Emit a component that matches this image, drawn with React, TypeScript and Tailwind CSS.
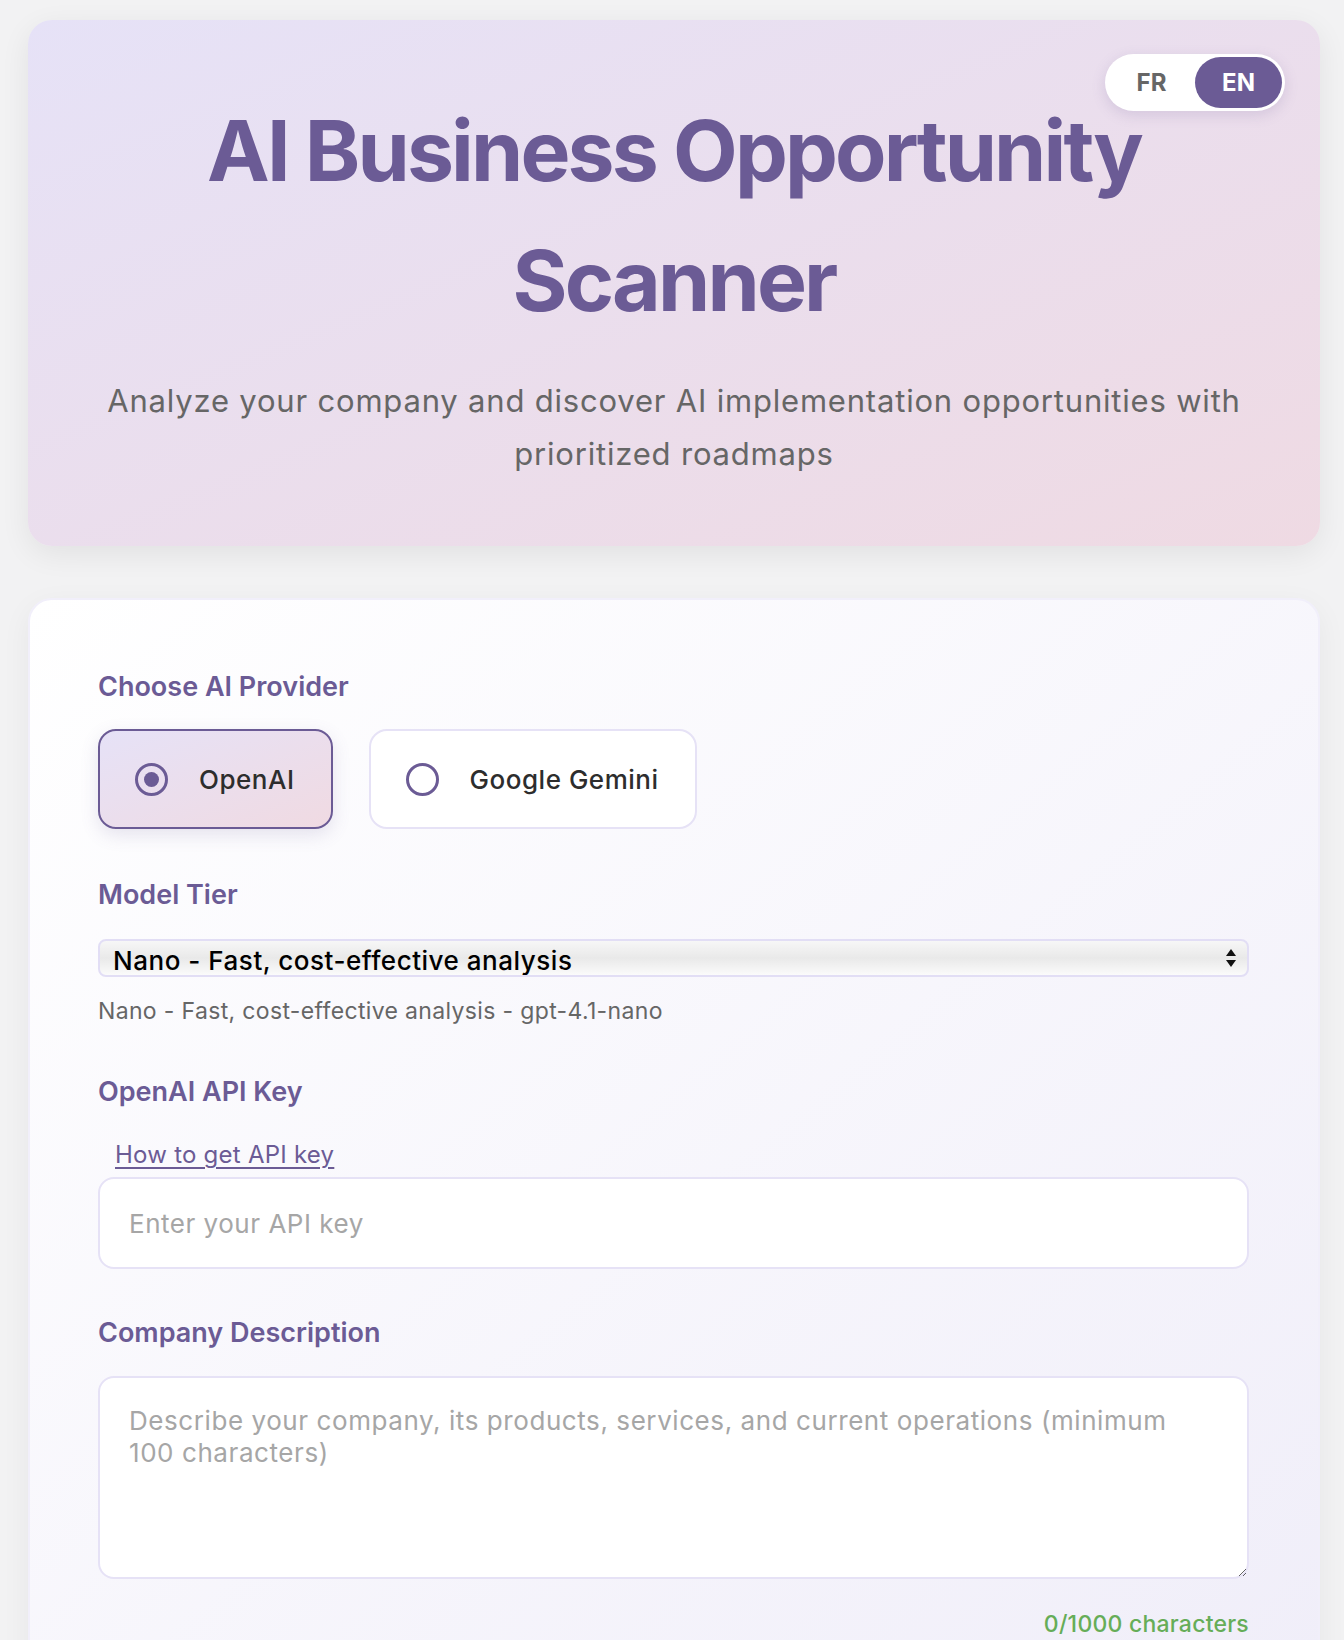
import { useState } from "react";

const font = { fontFamily: "Inter, 'Noto Sans', sans-serif" };

// Provider list
const providers = [
  { id: "openai", label: "OpenAI" },
  { id: "gemini", label: "Google Gemini" },
];

function Radio({ checked }: { checked: boolean }) {
  return (
    <span className="w-[33px] h-[33px] rounded-full border-[3px] border-[#6b5b95] flex items-center justify-center shrink-0">
      {checked && <span className="w-[15px] h-[15px] rounded-full bg-[#6b5b95]" />}
    </span>
  );
}

export default function App() {
  const [lang, setLang] = useState("en");
  const [provider, setProvider] = useState("openai");
  const [description, setDescription] = useState("");

  return (
    <div className="min-h-[1640px] bg-[#f2f2f3] pl-[28px] pr-[24px] pt-[20px] pb-10" style={font}>
      {/* Header */}
      <header className="relative rounded-3xl bg-gradient-to-br from-[#e6e2f7] to-[#efdae3] px-16 pt-[66px] pb-[66px] text-center shadow-[0_8px_30px_rgba(0,0,0,0.07)]">
        <div className="absolute top-[34px] right-[35px] flex items-center h-[57px] w-[180px] p-[3px] bg-white rounded-full shadow-[0_4px_14px_rgba(107,91,149,0.18)]">
          <button
            onClick={() => setLang("fr")}
            className={`flex-1 h-full rounded-full text-[24px] font-bold ${
              lang === "fr" ? "bg-[#6b5b95] text-white" : "text-[#666666]"
            }`}
          >
            FR
          </button>
          <button
            onClick={() => setLang("en")}
            className={`flex-1 h-full rounded-full text-[24px] font-bold ${
              lang === "en" ? "bg-[#6b5b95] text-white" : "text-[#666666]"
            }`}
          >
            EN
          </button>
        </div>

        <h1 className="text-[84px] leading-[130px] font-bold tracking-[-0.034em] text-[#6b5b95]">
          AI Business Opportunity
          <br />
          Scanner
        </h1>
        <p className="mt-[28px] text-[31px] leading-[53px] tracking-[0.026em] text-[#666666]">
          Analyze your company and discover AI implementation opportunities with prioritized roadmaps
        </p>
      </header>

      {/* Form card */}
      <main className="mt-[52px] rounded-3xl border-2 border-[#f1effa] bg-gradient-to-br from-white to-[#f0eef9] pl-[68px] pr-[69px] pt-[71px] pb-10 shadow-[0_8px_30px_rgba(0,0,0,0.05)]">
        {/* Provider */}
        <h2 className="text-[27px] leading-[32px] font-semibold text-[#6b5b95]">Choose AI Provider</h2>
        <div className="mt-[26px] flex gap-[36px]">
          {providers.map((p) => {
            const active = provider === p.id;
            return (
              <button
                key={p.id}
                onClick={() => setProvider(p.id)}
                className={`h-[100px] flex items-center gap-[31px] pl-[35px] pr-[36px] rounded-[18px] border-2 text-[26px] font-medium tracking-[0.02em] text-[#2d2d2d] ${
                  active
                    ? "border-[#6b5b95] bg-gradient-to-br from-[#e6e2f7] to-[#f0dae2] shadow-[0_6px_18px_rgba(107,91,149,0.16)]"
                    : "border-[#e6e2f6] bg-white"
                }`}
              >
                <Radio checked={active} />
                {p.label}
              </button>
            );
          })}
        </div>

        {/* Model tier */}
        <h2 className="mt-[50px] text-[27px] leading-[32px] font-semibold text-[#6b5b95]">Model Tier</h2>
        <div className="relative mt-[28px]">
          <select className="w-full h-[38px] appearance-none rounded-lg border-2 border-[#e2def5] bg-gradient-to-b from-[#f7f7f7] via-[#e9e9e9] to-[#fbfbfb] pl-[13px] text-[26px] font-medium tracking-[0.02em] text-black outline-none">
            <option>Nano - Fast, cost-effective analysis</option>
            <option>Mini - Balanced analysis</option>
            <option>Standard - Deep analysis</option>
          </select>
          <svg className="absolute right-[12px] top-[9px] pointer-events-none" width="12" height="20" viewBox="0 0 12 20">
            <path d="M6 1 L11 8 H1 Z" fill="#111" />
            <path d="M6 19 L11 12 H1 Z" fill="#111" />
          </svg>
        </div>
        <p className="mt-[20px] text-[23px] leading-[28px] tracking-[0.015em] text-[#666666]">
          Nano - Fast, cost-effective analysis - gpt-4.1-nano
        </p>

        {/* API key */}
        <h2 className="mt-[51px] text-[27px] leading-[32px] font-semibold text-[#6b5b95]">OpenAI API Key</h2>
        <a href="#" className="inline-block mt-[32px] ml-[17px] text-[24px] leading-[30px] tracking-[0.01em] text-[#6b5b95] underline underline-offset-4">
          How to get API key
        </a>
        <input
          type="password"
          placeholder="Enter your API key"
          className="mt-[7px] block w-full h-[92px] rounded-2xl border-2 border-[#e6e2f6] bg-white px-[29px] text-[26px] tracking-[0.02em] text-[#333] placeholder:text-[#a6a6a6] outline-none"
        />

        {/* Description */}
        <h2 className="mt-[48px] text-[27px] leading-[32px] font-semibold text-[#6b5b95]">Company Description</h2>
        <textarea
          value={description}
          onChange={(e) => setDescription(e.target.value)}
          placeholder="Describe your company, its products, services, and current operations (minimum 100 characters)"
          className="mt-[27px] block w-full h-[203px] rounded-2xl border-2 border-[#e6e2f6] bg-white pl-[29px] pr-[52px] py-[27px] text-[26px] leading-[32px] tracking-[0.022em] text-[#333] placeholder:text-[#a6a6a6] outline-none"
        />
        <p className="mt-[31px] text-right text-[23px] leading-[28px] tracking-[0.01em] font-medium text-[#66ad58]">
          {description.length}/1000 characters
        </p>
      </main>
    </div>
  );
}
